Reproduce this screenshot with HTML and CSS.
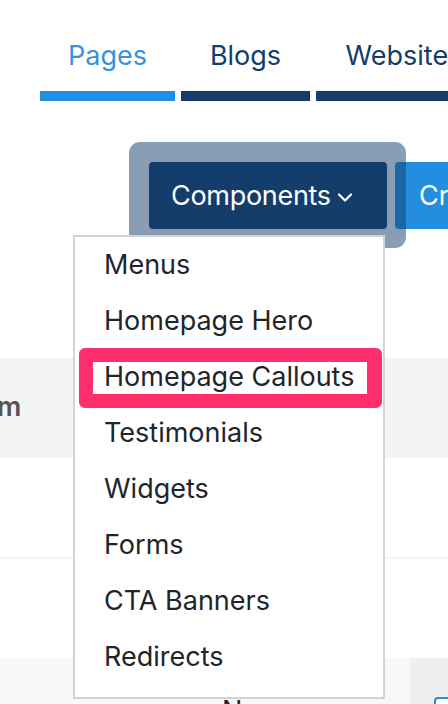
FILE: index.html
```html
<!DOCTYPE html>
<html lang="en">
<head>
<meta charset="utf-8">
<title>Components menu</title>
<link rel="stylesheet" href="styles.css">
</head>
<body>
<nav class="tabs">
  <a class="tab tab-active"><span class="tab-label">Pages</span></a>
  <a class="tab tab-blogs"><span class="tab-label">Blogs</span></a>
  <a class="tab tab-sites"><span class="tab-label">Websites</span></a>
</nav>

<div class="toolbar">
  <div class="btn-wrap">
    <span class="focus-ring"></span>
    <button class="btn btn-dark"><span class="btn-text">Components</span><svg class="chev" width="16" height="11" viewBox="0 0 16 11"><path d="M2 2.5 L8 8.5 L14 2.5" fill="none" stroke="#fff" stroke-width="2.2" stroke-linecap="round" stroke-linejoin="round"/></svg></button>
  </div>
  <button class="btn btn-blue">Create</button>
</div>

<div class="table">
  <div class="row row-head"><span class="cell-m">m</span></div>
  <div class="row row-white row-line"></div>
  <div class="row row-white"></div>
  <div class="row row-foot">
    <span class="cell-n">N</span>
    <span class="col-dark"><span class="checkbox"></span></span>
  </div>
</div>

<ul class="menu">
  <li class="menu-item">Menus</li>
  <li class="menu-item">Homepage Hero</li>
  <li class="menu-item menu-item-marked"><span class="mark"></span><span class="menu-text">Homepage Callouts</span></li>
  <li class="menu-item">Testimonials</li>
  <li class="menu-item">Widgets</li>
  <li class="menu-item">Forms</li>
  <li class="menu-item">CTA Banners</li>
  <li class="menu-item">Redirects</li>
</ul>
</body>
</html>
```

FILE: styles.css
```css
* { box-sizing: border-box; }

html, body {
  margin: 0;
  padding: 0;
  background: #fff;
}

body {
  position: relative;
  width: 448px;
  height: 704px;
  overflow: hidden;
  font-family: Inter, "Noto Sans", sans-serif;
  font-size: 27px;
  color: #212529;
}

/* tabs */
.tabs {
  display: flex;
  gap: 6px;
  padding-left: 40px;
}
.tab {
  display: flex;
  flex-direction: column;
  align-items: center;
  padding-top: 40px;
  flex: none;
}
.tab-label {
  line-height: 32px;
  margin-bottom: 19px;
  color: #143d6b;
  white-space: nowrap;
}
.tab::after {
  content: "";
  display: block;
  width: 100%;
  height: 10px;
  background: #143d6b;
}
.tab-active { width: 135px; }
.tab-active .tab-label { color: #3592e0; }
.tab-active::after { background: #238ee0; }
.tab-blogs { width: 129px; }
.tab-sites { width: 176px; }

/* toolbar */
.toolbar {
  display: flex;
  gap: 8px;
  margin-top: 61px;
  padding-left: 149px;
  width: 700px;
}
.btn-wrap {
  position: relative;
  z-index: 1;
}
.focus-ring {
  position: absolute;
  left: -20px;
  top: -20px;
  right: -19px;
  bottom: -19px;
  border-radius: 11px;
  background: rgba(20, 61, 107, 0.5);
}
.btn {
  position: relative;
  height: 67px;
  border: 0;
  border-radius: 4px;
  font: inherit;
  font-size: 27px;
  color: #fff;
  display: flex;
  align-items: center;
  white-space: nowrap;
}
.btn-dark {
  width: 238px;
  padding: 0 0 0 22px;
  gap: 6px;
  background: #143d6b;
}
.btn-text {
  letter-spacing: -0.3px;
}
.chev {
  display: block;
  flex: none;
  width: 16px;
  height: 11px;
  margin-top: 3px;
}
.btn-blue {
  width: 200px;
  padding: 0 0 0 24px;
  background: #238ee0;
}

/* background table */
.table {
  margin-top: 129px;
}
.row {
  position: relative;
  width: 448px;
}
.row-head {
  height: 100px;
  background: #f4f4f4;
}
.cell-m {
  position: absolute;
  left: -3px;
  top: 33px;
  font-weight: 600;
  color: #555;
  line-height: 32px;
}
.row-white {
  height: 99px;
  background: #fff;
}
.row-line {
  height: 101px;
  border-bottom: 2px solid #f3f3f3;
}
.row-foot {
  height: 60px;
  background: #f8f8f8;
  display: flex;
  justify-content: flex-end;
}
.cell-n {
  position: absolute;
  left: 222px;
  top: 37px;
  color: #212529;
  line-height: 32px;
}
.col-dark {
  width: 38px;
  height: 100%;
  background: #efefef;
  position: relative;
}
.checkbox {
  position: absolute;
  left: 24px;
  top: 39px;
  width: 24px;
  height: 24px;
  border: 2px solid #2a8be0;
  border-radius: 4px;
  background: #fff;
}

/* dropdown menu */
.menu {
  position: absolute;
  left: 73px;
  top: 235px;
  width: 312px;
  height: 464px;
  margin: 0;
  padding: 0;
  list-style: none;
  background: #fff;
  border: 2px solid #d3d3d3;
  z-index: 5;
}
.menu-item {
  position: relative;
  height: 56px;
  line-height: 56px;
  padding-left: 29px;
  white-space: nowrap;
  color: #212529;
}
.mark {
  position: absolute;
  left: 4px;
  right: 1px;
  top: -1px;
  bottom: -3px;
  border: 14px solid #ff2e6c;
  border-right-width: 15px;
  border-radius: 6px;
  background: #fff;
}
.menu-text {
  position: relative;
}
```
